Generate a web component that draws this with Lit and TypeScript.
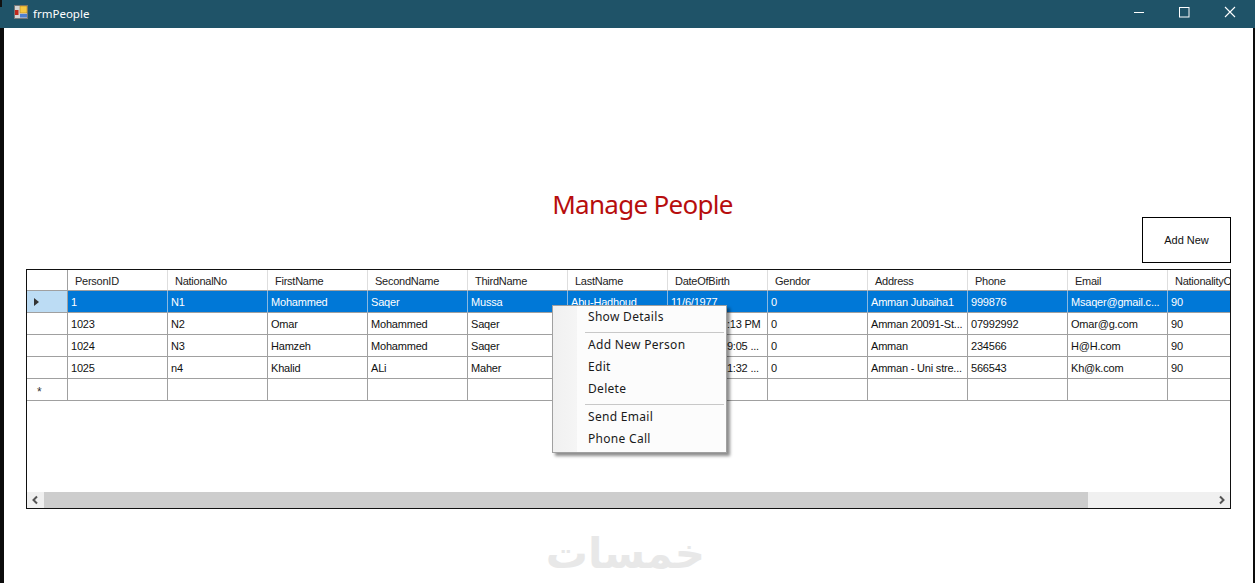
import { LitElement, html, css } from "lit";
import { customElement } from "lit/decorators.js";

const columns = [
  "PersonID", "NationalNo", "FirstName", "SecondName", "ThirdName", "LastName",
  "DateOfBirth", "Gendor", "Address", "Phone", "Email", "NationalityC",
];

const rows = [
  ["1", "N1", "Mohammed", "Saqer", "Mussa", "Abu-Hadhoud", "11/6/1977", "0", "Amman Jubaiha1", "999876", "Msaqer@gmail.c...", "90"],
  ["1023", "N2", "Omar", "Mohammed", "Saqer", "", "1/1/2000 12:13 PM", "0", "Amman 20091-St...", "07992992", "Omar@g.com", "90"],
  ["1024", "N3", "Hamzeh", "Mohammed", "Saqer", "", "12/12/2000 9:05 ...", "0", "Amman", "234566", "H@H.com", "90"],
  ["1025", "n4", "Khalid", "ALi", "Maher", "", "12/12/2000 1:32 ...", "0", "Amman - Uni stre...", "566543", "Kh@k.com", "90"],
  ["", "", "", "", "", "", "", "", "", "", "", ""],
];

@customElement("app-root")
export class AppRoot extends LitElement {
  static styles = css`
    :host {
      display: block;
      width: 1255px;
      height: 583px;
      overflow: hidden;
      position: relative;
      background: #fff;
      font-family: "Liberation Sans", Arial, sans-serif;
    }
    .titlebar {
      height: 28px;
      background: #1f5368;
      color: #fff;
      display: flex;
      align-items: center;
      padding-left: 14px;
      gap: 5px;
      font: 11.5px "Noto Sans", sans-serif;
    }
    .titlebar .icon { margin-bottom: 4px; flex: none; }
    .titlebar .name { flex: 1; padding-bottom: 2px; }
    .corner {
      position: absolute;
      left: 0;
      top: 0;
      width: 2px;
      height: 7px;
      background: #111;
    }
    .winbtns { display: flex; }
    .winbtns svg { display: block; width: 46px; height: 28px; }
    .client {
      height: 555px;
      box-sizing: border-box;
      padding-top: 160px;
      border-left: 4px solid #0c0c0c;
      border-right: 2px solid #0c0c0c;
      display: flex;
      flex-direction: column;
      align-items: stretch;
    }
    h1 {
      margin: 0;
      height: 36px;
      text-align: center;
      font: 400 26px/33px "Noto Sans", sans-serif;
      letter-spacing: -0.7px;
      color: #b70d0d;
      padding-left: 28px;
    }
    .actions {
      display: flex;
      justify-content: flex-end;
      margin-top: -7px;
      padding-right: 22px;
    }
    .addnew {
      width: 89px;
      height: 46px;
      box-sizing: border-box;
      border: 1px solid #000;
      background: #fff;
      font: 11px "Liberation Sans", sans-serif;
      color: #111;
      padding: 0;
    }
    .grid {
      margin: 6px 22px 0 22px;
      height: 240px;
      box-sizing: border-box;
      border: 1px solid #111;
      overflow: hidden;
      display: flex;
      flex-direction: column;
      background: #fff;
    }
    .table { flex: 1; overflow: hidden; }
    .row { display: flex; height: 22px; font-size: 11px; letter-spacing: -0.2px; color: #111; }
    .row.head { height: 21px; }
    .cell {
      flex: none;
      width: 100px;
      box-sizing: border-box;
      border-right: 1px solid #a0a0a0;
      border-bottom: 1px solid #a0a0a0;
      padding: 0 0 0 3px;
      line-height: 22px;
      white-space: nowrap;
      overflow: hidden;
    }
    .rh {
      flex: none;
      width: 41px;
      box-sizing: border-box;
      border-right: 1px solid #a0a0a0;
      border-bottom: 1px solid #a0a0a0;
      display: flex;
      align-items: center;
      padding-left: 7px;
    }
    .head .cell {
      padding-left: 7px;
      line-height: 22px;
      letter-spacing: -0.25px;
      border-right-color: #dedede;
      border-bottom-color: #a0a0a0;
      color: #222;
    }
    .selected .cell { background: #0078d7; color: #fff; border-right-color: #8ab8e0; }
    .selected .rh { background: #bcdcf4; }
    .tri { width: 0; height: 0; border-left: 5px solid #333; border-top: 4px solid transparent; border-bottom: 4px solid transparent; }
    .star { font-size: 12px; color: #333; line-height: 1; margin: 4px 0 0 3px; }
    .scroll {
      height: 16px;
      flex: none;
      background: #f0f0f0;
      display: flex;
      align-items: center;
    }
    .scroll svg { flex: none; width: 17px; height: 16px; display: block; }
    .track { flex: 1; height: 16px; }
    .thumb { width: 1044px; height: 16px; background: #cdcdcd; }
    .menu {
      position: absolute;
      left: 552px;
      top: 305px;
      width: 175px;
      height: 148px;
      box-sizing: border-box;
      border: 1px solid #a0a0a0;
      background: linear-gradient(90deg, #f0f0f0 0, #f5f5f5 24px, #fcfcfc 24px);
      box-shadow: 3px 3px 3px rgba(0, 0, 0, 0.45);
      padding: 1px 0 0;
      font: 12px "Noto Sans", sans-serif;
      color: #1a1a1a;
      letter-spacing: 0.3px;
    }
    .item { height: 22px; line-height: 20px; padding-left: 35px; }
    .sep { height: 1px; background: #c8c8c8; margin: 3px 2px 2px 32px; }
    .mark {
      position: absolute;
      left: 550px;
      top: 529px;
      width: 155px;
      text-align: center;
      font: 700 42px/50px "DejaVu Sans", sans-serif;
      color: #e8e8e8;
    }
  `;

  render() {
    return html`
      <div class="corner"></div>
      <div class="titlebar">
        <svg class="icon" width="14" height="14" viewBox="0 0 14 14">
          <rect x="0.5" y="0.5" width="13" height="13" fill="#d4d4d4" stroke="#777" />
          <rect x="6" y="1" width="7" height="7" fill="#f5c842" stroke="#a87a10" stroke-width="0.5" />
          <rect x="1" y="5" width="3.5" height="5" fill="#c0281c" />
          <rect x="6" y="9" width="7" height="3.5" fill="#4f7fd0" />
        </svg>
        <span class="name">frmPeople</span>
        <div class="winbtns">
          <svg viewBox="0 0 46 28"><path d="M17 12.5h10" stroke="#fff" fill="none" /></svg>
          <svg viewBox="0 0 46 28"><rect x="16.5" y="7.5" width="9.5" height="9.5" stroke="#fff" fill="none" /></svg>
          <svg viewBox="0 0 46 28"><path d="M16 7l10 10M26 7L16 17" stroke="#fff" fill="none" stroke-width="1.1" /></svg>
        </div>
      </div>
      <div class="client">
        <h1>Manage People</h1>
        <div class="actions"><button class="addnew">Add New</button></div>
        <div class="grid">
          <div class="table">
            <div class="row head">
              <div class="rh"></div>
              ${columns.map((c) => html`<div class="cell">${c}</div>`)}
            </div>
            ${rows.map(
              (r, i) => html`
                <div class="row ${i === 0 ? "selected" : ""}">
                  <div class="rh">
                    ${i === 0 ? html`<span class="tri"></span>` : ""}
                    ${i === 4 ? html`<span class="star">*</span>` : ""}
                  </div>
                  ${r.map((v) => html`<div class="cell">${v}</div>`)}
                </div>
              `
            )}
          </div>
          <div class="scroll">
            <svg viewBox="0 0 17 16"><path d="M10 4.5L6.5 8 10 11.5" stroke="#555" stroke-width="2" fill="none" /></svg>
            <div class="track"><div class="thumb"></div></div>
            <svg viewBox="0 0 17 16"><path d="M7 4.5L10.5 8 7 11.5" stroke="#555" stroke-width="2" fill="none" /></svg>
          </div>
        </div>
      </div>
      <div class="menu">
        <div class="item">Show Details</div>
        <div class="sep"></div>
        <div class="item">Add New Person</div>
        <div class="item">Edit</div>
        <div class="item">Delete</div>
        <div class="sep"></div>
        <div class="item">Send Email</div>
        <div class="item">Phone Call</div>
      </div>
      <div class="mark" dir="rtl" lang="ar">خمسات</div>
    `;
  }
}
